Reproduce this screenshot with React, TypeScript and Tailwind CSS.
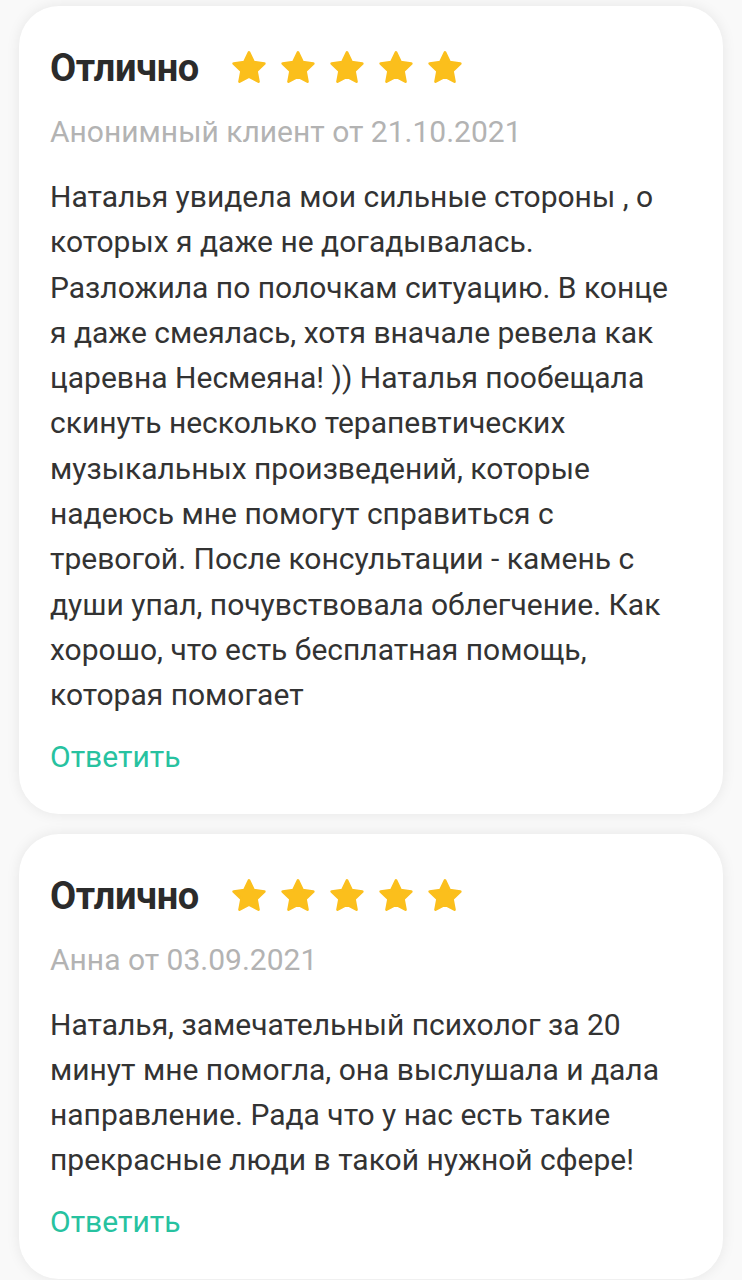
const Star = () => (
  <svg viewBox="0 0 24 24" className="h-[40px] w-[40px]">
    <path
      d="M12 2.6l2.8 5.9 6.4.8-4.7 4.5 1.2 6.4L12 17.1l-5.7 3.1 1.2-6.4-4.7-4.5 6.4-.8z"
      fill="#fbbf1c"
      stroke="#fbbf1c"
      strokeWidth="1.6"
      strokeLinejoin="round"
    />
  </svg>
)

type Review = {
  author: string
  date: string
  text: string
}

const reviews: Review[] = [
  {
    author: 'Анонимный клиент',
    date: '21.10.2021',
    text: 'Наталья увидела мои сильные стороны , о которых я даже не догадывалась. Разложила по полочкам ситуацию. В конце я даже смеялась, хотя вначале ревела как царевна Несмеяна! )) Наталья пообещала скинуть несколько терапевтических музыкальных произведений, которые надеюсь мне помогут справиться с тревогой. После консультации - камень с души упал, почувствовала облегчение. Как хорошо, что есть бесплатная помощь, которая помогает',
  },
  {
    author: 'Анна',
    date: '03.09.2021',
    text: 'Наталья, замечательный психолог за 20 минут мне помогла, она выслушала и дала направление. Рада что у нас есть такие прекрасные люди в такой нужной сфере!',
  },
]

const ReviewCard = ({ review }: { review: Review }) => {
  return (
    <div className="bg-white rounded-[40px] shadow-[0_0_14px_rgba(0,0,0,0.08)] pl-[31px] pr-[36px] pt-[42px] pb-[39px]">
      <div className="flex items-center h-[40px]">
        <h3 className="text-[38px] font-bold text-[#2b2b2b] leading-[40px] tracking-[-0.4px]">Отлично</h3>
        <div className="flex items-center ml-[30px] gap-[9px]">
          <Star />
          <Star />
          <Star />
          <Star />
          <Star />
        </div>
      </div>
      <p className="mt-[26px] text-[30px] leading-[36px] text-[#b3b3b3]">
        {review.author} от {review.date}
      </p>
      <p className="mt-[24px] text-[30px] leading-[45.3px] text-[#333333]">{review.text}</p>
      <button className="mt-[21px] text-[30px] leading-[36px] text-[#27c2a0]">Ответить</button>
    </div>
  )
}

export default function App() {
  return (
    <div className="min-h-screen bg-[#f9f9f9] px-[19px] pt-[6px] pb-[4px] flex flex-col gap-[20px] font-['Roboto',sans-serif]">
      {reviews.map((r) => (
        <ReviewCard key={r.date} review={r} />
      ))}
    </div>
  )
}
